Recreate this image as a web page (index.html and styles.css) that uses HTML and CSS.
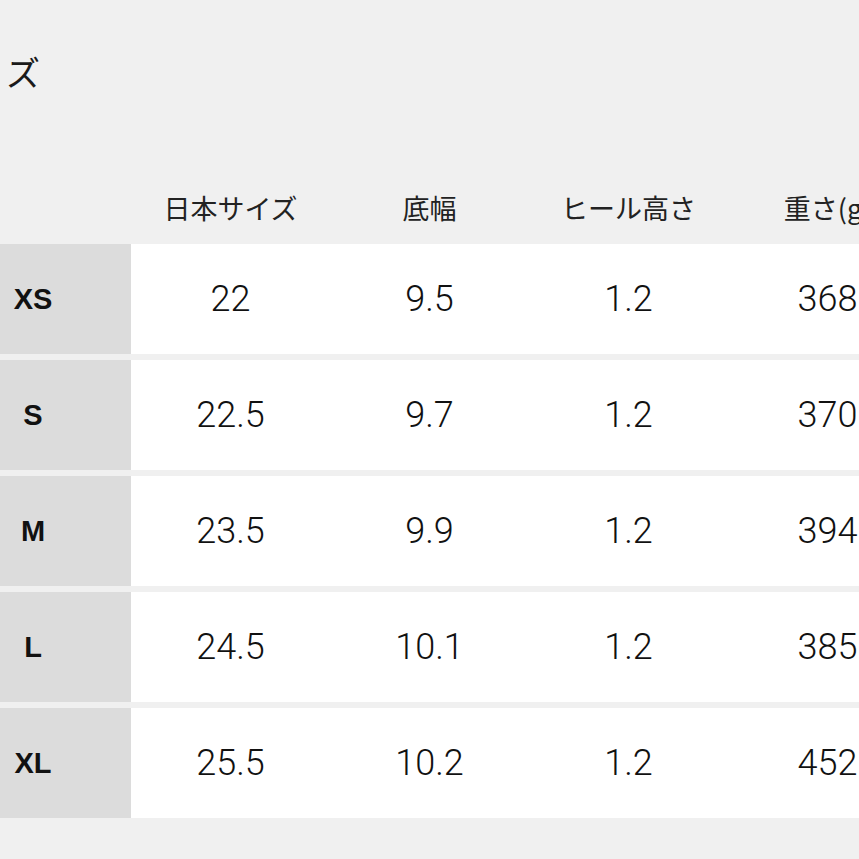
FILE: index.html
```html
<!DOCTYPE html>
<html lang="ja">
<head>
<meta charset="utf-8">
<link rel="stylesheet" href="styles.css">
</head>
<body>
<div class="page">
  <h1 class="title">ズ</h1>
  <div class="table">
    <div class="head">
      <div class="corner"></div>
      <div class="hcell">日本サイズ</div>
      <div class="hcell">底幅</div>
      <div class="hcell">ヒール高さ</div>
      <div class="hcell">重さ(g)</div>
    </div>
    <div class="row"><div class="label">XS</div><div class="cell">22</div><div class="cell">9.5</div><div class="cell">1.2</div><div class="cell">368</div></div>
    <div class="row"><div class="label">S</div><div class="cell">22.5</div><div class="cell">9.7</div><div class="cell">1.2</div><div class="cell">370</div></div>
    <div class="row"><div class="label">M</div><div class="cell">23.5</div><div class="cell">9.9</div><div class="cell">1.2</div><div class="cell">394</div></div>
    <div class="row"><div class="label">L</div><div class="cell">24.5</div><div class="cell">10.1</div><div class="cell">1.2</div><div class="cell">385</div></div>
    <div class="row"><div class="label">XL</div><div class="cell">25.5</div><div class="cell">10.2</div><div class="cell">1.2</div><div class="cell">452</div></div>
  </div>
</div>
</body>
</html>
```

FILE: styles.css
```css
html, body {
  margin: 0;
  padding: 0;
  background: #f0f0f0;
  overflow: hidden;
}
.page {
  width: 859px;
  height: 859px;
  overflow: hidden;
  font-family: Roboto, "Noto Sans CJK JP", sans-serif;
  color: #1a1a1a;
}
.title {
  margin: 0;
  padding: 52px 0 0 6px;
  height: 98px;
  box-sizing: border-box;
  font-family: "Noto Sans CJK JP", sans-serif;
  font-weight: 400;
  font-size: 34px;
  line-height: 40px;
}
.table {
  display: flex;
  flex-direction: column;
  gap: 6px;
  width: 1000px;
}
.head {
  display: flex;
  height: 140px;
  align-items: flex-end;
}
.corner {
  width: 131px;
  flex: none;
}
.hcell {
  width: 199px;
  flex: none;
  text-align: center;
  font-family: "Noto Sans CJK JP", sans-serif;
  font-size: 27px;
  line-height: 40px;
  padding-bottom: 10px;
  color: #222;
}
.row {
  display: flex;
  height: 110px;
}
.label {
  width: 131px;
  flex: none;
  box-sizing: border-box;
  padding-right: 65px;
  background: #dcdcdc;
  display: flex;
  align-items: center;
  justify-content: center;
  font-family: "Liberation Sans", Arial, sans-serif;
  font-weight: 700;
  font-size: 29px;
  color: #111;
}
.cell {
  width: 199px;
  flex: none;
  background: #fff;
  display: flex;
  align-items: center;
  justify-content: center;
  font-weight: 300;
  font-size: 36px;
  color: #111;
}
```
